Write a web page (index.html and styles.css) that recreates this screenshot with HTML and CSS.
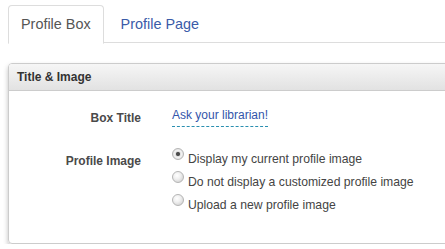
FILE: index.html
```html
<!DOCTYPE html>
<html lang="en">
<head>
    <meta charset="UTF-8">
    <title>Profile Settings</title>
    <link rel="stylesheet" href="styles.css">
</head>
<body>
    <!-- Tabs -->
    <ul class="tabs">
        <li class="tab active"><a href="#">Profile Box</a></li>
        <li class="tab"><a href="#">Profile Page</a></li>
    </ul>

    <!-- Settings panel -->
    <section class="panel">
        <div class="panel_head">Title &amp; Image</div>
        <div class="panel_body">
            <div class="row">
                <div class="label">Box Title</div>
                <div class="field"><a href="#" class="editable">Ask your librarian!</a></div>
            </div>
            <div class="row">
                <div class="label">Profile Image</div>
                <div class="field radios">
                    <label class="radio"><input type="radio" name="img" checked> Display my current profile image</label>
                    <label class="radio"><input type="radio" name="img"> Do not display a customized profile image</label>
                    <label class="radio"><input type="radio" name="img"> Upload a new profile image</label>
                </div>
            </div>
        </div>
    </section>
</body>
</html>
```

FILE: styles.css
```css
body {
    font-family: "Liberation Sans", Arial, sans-serif;
    margin: 0;
    padding: 5px 0 0 8px;
    background: #fff;
    color: #333;
    overflow: hidden;
}
/* Tabs */
.tabs {
    list-style: none;
    margin: 0;
    padding: 0;
    display: flex;
    border-bottom: 1px solid #ddd;
    height: 37px;
}
.tab {
    margin-right: 4px;
}
.tab a {
    display: block;
    height: 36px;
    line-height: 36px;
    padding: 0 12px;
    font-size: 14.4px;
    color: #3a5ba8;
    text-decoration: none;
    border: 1px solid transparent;
    border-radius: 4px 4px 0 0;
}
.tab.active a {
    color: #555;
    background: #fff;
    border-color: #ddd #ddd transparent;
    height: 37px;
}
/* Panel */
.panel {
    margin-top: 20px;
    width: 460px;
    border: 1px solid #ccc;
    border-radius: 4px;
    box-shadow: 0 3px 5px rgba(0, 0, 0, 0.25);
}
.panel_head {
    height: 26px;
    line-height: 26px;
    padding: 0 8px;
    font-size: 12px;
    font-weight: bold;
    color: #333;
    border-bottom: 1px solid #ccc;
    background: linear-gradient(#f6f6f6, #e2e2e2);
    border-radius: 3px 3px 0 0;
}
.panel_body {
    padding: 17px 0 29px;
}
.row {
    display: flex;
    margin-bottom: 24px;
}
.row:last-child {
    margin-bottom: 0;
}
.label {
    width: 132px;
    text-align: right;
    font-size: 12px;
    font-weight: bold;
    color: #4a4a4a;
    padding-top: 3px;
}
.field {
    margin-left: 31px;
    font-size: 12px;
}
.editable {
    color: #3355aa;
    text-decoration: none;
    border-bottom: 1px dashed #2a8fb0;
    padding-bottom: 4px;
    display: inline-block;
}
.radios {
    display: flex;
    flex-direction: column;
    gap: 6px;
}
.radio {
    display: flex;
    align-items: flex-start;
    color: #444;
    line-height: 17px;
    font-size: 12.2px;
}
/* Grey bevelled radio buttons */
.radio input {
    appearance: none;
    -webkit-appearance: none;
    margin: 0 4px 0 0;
    width: 12px;
    height: 12px;
    border: 1px solid #b5b5b5;
    border-radius: 50%;
    background: radial-gradient(circle at 40% 35%, #fff 0, #f0f0f0 40%, #c8c8c8 100%);
    box-sizing: border-box;
    position: relative;
    top: -3px;
    flex-shrink: 0;
}
.radio input:checked {
    background: radial-gradient(circle, #444 0, #555 1.8px, #ddd 2.4px, #f2f2f2 3.5px, #cfcfcf 100%);
}
```
